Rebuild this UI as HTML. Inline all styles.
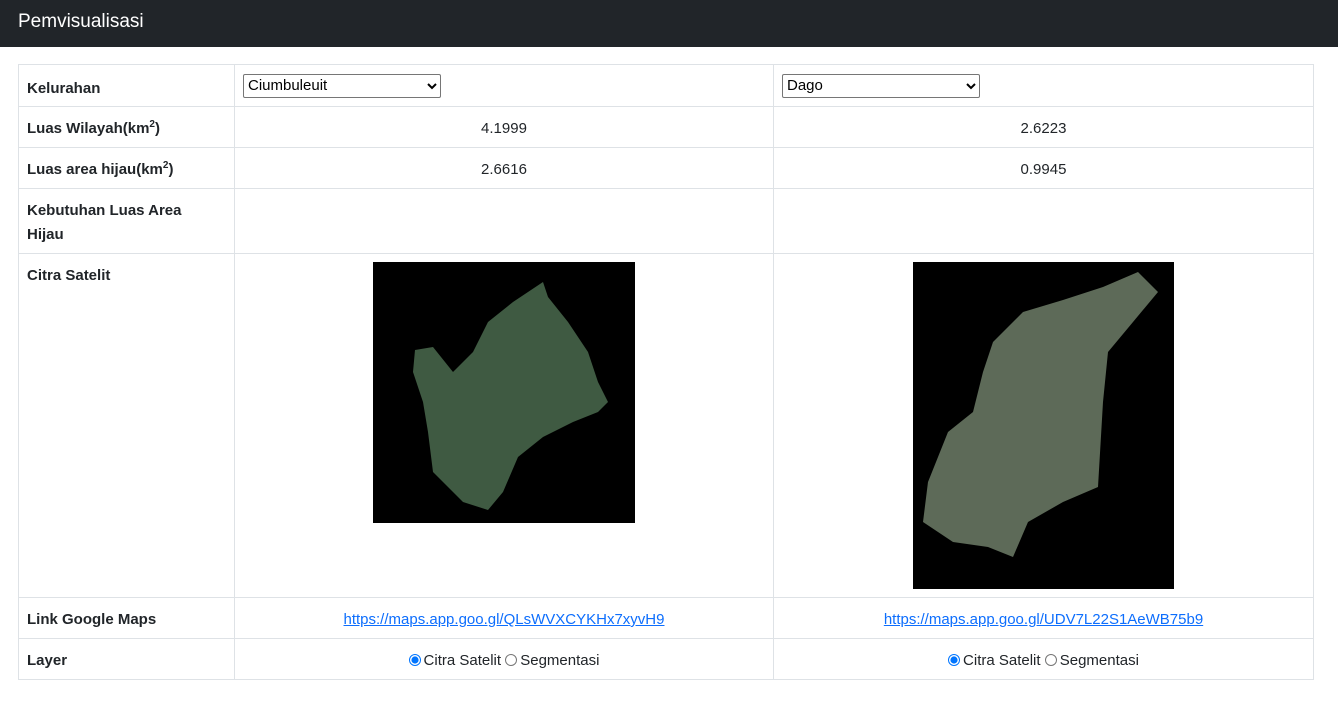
<!DOCTYPE html>
<html><head><style>
body{margin:0;font-family:"Liberation Sans",sans-serif;font-size:15px;color:#212529;background:#fff}
.nav{height:47px;background:#212529;color:#fff;font-size:19px;line-height:44px;padding-left:18px}
table{position:absolute;left:18px;top:64px;width:1296px;border-collapse:collapse}
td{border:1px solid #dee2e6;padding:10px 8px 6px;vertical-align:top;line-height:23px}
td.h{font-weight:bold;width:199px}
td.c{text-align:center}
select{font-family:"Liberation Sans",sans-serif;font-size:15px;width:198px;height:24px;border:1px solid #767676;border-radius:2px;background:#fff}
a{color:#0d6efd}
sup{font-size:10px;line-height:0}
input{margin:0 3px 0 0;vertical-align:-1px;width:12px;height:12px}
</style></head><body>
<div class="nav">Pemvisualisasi</div>
<table>
<tr style="height:42px"><td class="h" style="vertical-align:middle;padding-top:12px">Kelurahan</td><td style="width:522px;vertical-align:middle;padding-top:6px"><select><option>Ciumbuleuit</option></select></td><td style="vertical-align:middle;padding-top:6px"><select><option>Dago</option></select></td></tr>
<tr style="height:41px"><td class="h">Luas Wilayah(km<sup>2</sup>)</td><td class="c">4.1999</td><td class="c">2.6223</td></tr>
<tr style="height:41px"><td class="h">Luas area hijau(km<sup>2</sup>)</td><td class="c">2.6616</td><td class="c">0.9945</td></tr>
<tr style="height:65px"><td class="h" style="line-height:24px">Kebutuhan Luas Area<br>Hijau</td><td></td><td></td></tr>
<tr style="height:344px"><td class="h">Citra Satelit</td>
<td class="c" style="padding-top:8px"><svg width="262" height="261" style="display:block;margin:0 auto" viewBox="0 0 262 261"><rect width="262" height="261" fill="#000"/><path d="M170 20 L175 35 L195 60 L215 90 L225 120 L235 140 L225 150 L200 160 L170 175 L145 195 L130 230 L115 248 L90 240 L75 225 L60 210 L55 170 L50 140 L40 110 L42 88 L60 85 L80 110 L100 90 L115 60 L140 40 Z" fill="#3f5a42"/></svg></td>
<td class="c" style="padding-top:8px"><svg width="261" height="327" style="display:block;margin:0 auto" viewBox="0 0 261 327"><rect width="261" height="327" fill="#000"/><path d="M225 10 L245 30 L220 60 L195 90 L190 140 L185 225 L150 240 L115 260 L100 295 L75 285 L40 280 L10 260 L15 220 L35 170 L60 150 L70 110 L80 80 L110 50 L150 38 L190 25 Z" fill="#5d6a58"/></svg></td></tr>
<tr style="height:41px"><td class="h">Link Google Maps</td><td class="c"><a href="#">https://maps.app.goo.gl/QLsWVXCYKHx7xyvH9</a></td><td class="c"><a href="#">https://maps.app.goo.gl/UDV7L22S1AeWB75b9</a></td></tr>
<tr style="height:41px"><td class="h">Layer</td><td class="c"><input type="radio" checked>Citra Satelit <input type="radio">Segmentasi</td><td class="c"><input type="radio" checked>Citra Satelit <input type="radio">Segmentasi</td></tr>
</table>
</body></html>
